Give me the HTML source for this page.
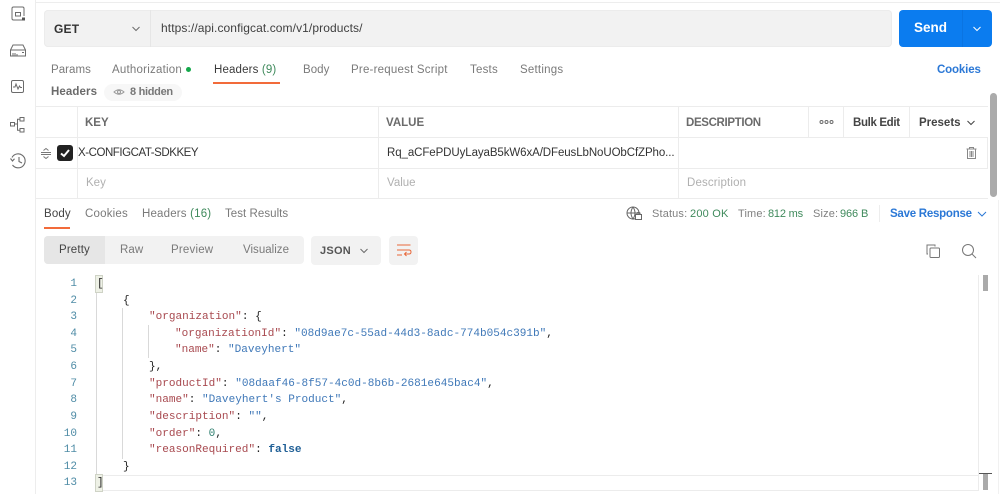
<!DOCTYPE html>
<html><head><meta charset="utf-8"><style>
html,body{margin:0;padding:0;background:#fff}
body{width:1000px;height:494px;overflow:hidden;position:relative;font-family:"Liberation Sans",sans-serif;font-size:11.5px;color:#6b6b6b}
#p{position:absolute;left:0;top:0;width:1000px;height:494px;filter:blur(.35px)}
.t{position:absolute;white-space:nowrap;line-height:16px;height:16px}
.b{position:absolute}
.c{position:absolute;white-space:pre;font-family:"Liberation Mono",monospace;font-size:11.05px;line-height:16px;height:16px;color:#212121}
.n{position:absolute;width:46px;left:31px;text-align:right;font-family:"Liberation Mono",monospace;font-size:11.05px;line-height:16px;color:#4f8ca6}
.k{color:#a8494f}.s{color:#3f78b8}.g{color:#3f8a5c}.d{color:#2f7f6f}
svg{position:absolute;fill:none;stroke:#6b6b6b;stroke-width:1}
</style></head><body><div id="p">
<div class="b" style="left:35px;top:0;width:1px;height:494px;background:#ededed"></div>
<div class="b" style="left:36px;top:2px;width:964px;height:1px;background:#ededed"></div>

<svg style="left:10px;top:5px" width="18" height="18" viewBox="0 0 18 18"><path d="M13 15H3.500Q2 15 2 13.500V3.500Q2 2 3.500 2H12.500Q14 2 14 3.500V11"/><path d="M5.500 7.500H10.500V11H5.500Z"/><rect x="12" y="12.500" width="3" height="3" fill="#555" stroke="none"/></svg>
<svg style="left:9px;top:42px" width="18" height="16" viewBox="0 0 18 16"><path d="M1.500 8L4 3H14L16.500 8V14H1.500Z"/><path d="M1.500 8H16.500M4 11V14M6 11V14M8 12V14M13 10.500H15"/></svg>
<svg style="left:10px;top:79px" width="16" height="16" viewBox="0 0 16 16"><rect x="1.500" y="1.500" width="12" height="12" rx="1.500"/><path d="M3 8H5L6 5L8 10L9.500 7L10.500 8.500H12"/></svg>
<svg style="left:9px;top:116px" width="18" height="18" viewBox="0 0 18 18"><rect x="1.500" y="6.500" width="4" height="3.500"/><rect x="11" y="1.500" width="4" height="3.500"/><rect x="11" y="12.500" width="4" height="3.500"/><path d="M5.500 8H8.500M11 3.300H8.500V14.300H11"/></svg>
<svg style="left:9px;top:152px" width="18" height="18" viewBox="0 0 18 18"><path d="M3 5.500A7 7 0 1 1 3.500 13M1.500 6.500L3.500 9L5.500 6.800M10 5V9.500L13 11" stroke-width="1.100"/></svg>

<div class="b" style="left:44px;top:10px;width:848px;height:37px;background:#f2f2f2;border-radius:4px;box-shadow:inset 0 0 0 1px #ececec"></div>
<div class="b" style="left:150px;top:10px;width:1px;height:37px;background:#e6e6e6"></div>
<div class="t" style="left:54px;top:21px;font-size:12px;font-weight:bold;color:#333;letter-spacing:.2px">GET</div>
<svg style="left:130px;top:24px" width="12" height="10" viewBox="0 0 12 10"><path d="M2.500 3L6 6.500L9.500 3"/></svg>
<div class="t" style="left:161px;top:20px;font-size:12px;color:#3f3f3f;letter-spacing:.09px">https://api.configcat.com/v1/products/</div>

<div class="b" style="left:899px;top:10px;width:93px;height:37px;background:#0b7cef;border-radius:4px"></div>
<div class="b" style="left:962px;top:10px;width:1px;height:37px;background:#0a74e2"></div>
<div class="t" style="left:914px;top:20px;font-size:13.5px;font-weight:bold;color:#fff">Send</div>
<svg style="left:971px;top:24px;stroke:#fff" width="12" height="10" viewBox="0 0 12 10"><path d="M2.500 3L6 6.500L9.500 3"/></svg>

<div class="t" style="left:51px;top:62px;letter-spacing:.05px;color:#7a7a7a">Params</div>
<div class="t" style="left:112px;top:62px;letter-spacing:.22px;color:#7a7a7a">Authorization</div>
<div class="b" style="left:186px;top:67px;width:5px;height:5px;border-radius:50%;background:#14a84b"></div>
<div class="t" style="left:214px;top:62px;letter-spacing:.15px;color:#3a3a3a">Headers <span class="g">(9)</span></div>
<div class="b" style="left:213px;top:82px;width:67px;height:2px;background:#f26b3a"></div>
<div class="t" style="left:303px;top:62px;letter-spacing:.05px;color:#7a7a7a">Body</div>
<div class="t" style="left:351px;top:62px;letter-spacing:.22px;color:#7a7a7a">Pre-request Script</div>
<div class="t" style="left:470px;top:62px;letter-spacing:.22px;color:#7a7a7a">Tests</div>
<div class="t" style="left:520px;top:62px;letter-spacing:.22px;color:#7a7a7a">Settings</div>
<div class="t" style="left:937px;top:62px;font-weight:bold;letter-spacing:-.15px;color:#2b78d6">Cookies</div>

<div class="t" style="left:51px;top:84px;font-weight:bold;letter-spacing:.1px;color:#6b6b6b">Headers</div>
<div class="b" style="left:104px;top:84px;width:78px;height:17px;background:#f7f7f7;border-radius:9px"></div>
<svg style="left:113px;top:87px" width="12" height="10" viewBox="0 0 12 10"><path d="M1 5Q6 .5 11 5Q6 9.500 1 5Z" stroke="#999"/><circle cx="6" cy="5" r="1.500" stroke="#999"/></svg>
<div class="t" style="left:130px;top:84px;font-size:11px;font-weight:bold;letter-spacing:-.3px;color:#777">8 hidden</div>

<div class="b" style="left:36px;top:106px;width:952px;height:1px;background:#ececec"></div>
<div class="b" style="left:36px;top:137px;width:952px;height:1px;background:#ececec"></div>
<div class="b" style="left:36px;top:168px;width:952px;height:1px;background:#ececec"></div>
<div class="b" style="left:36px;top:198px;width:952px;height:1px;background:#ececec"></div>
<div class="b" style="left:77px;top:106px;width:1px;height:92px;background:#ececec"></div>
<div class="b" style="left:378px;top:106px;width:1px;height:92px;background:#ececec"></div>
<div class="b" style="left:678px;top:106px;width:1px;height:92px;background:#ececec"></div>
<div class="b" style="left:808px;top:106px;width:1px;height:31px;background:#ececec"></div>
<div class="b" style="left:843px;top:106px;width:1px;height:31px;background:#ececec"></div>
<div class="b" style="left:909px;top:106px;width:1px;height:31px;background:#ececec"></div>
<div class="b" style="left:987px;top:137px;width:1px;height:31px;background:#ececec"></div>

<div class="t" style="left:85px;top:115px;font-weight:bold;font-size:11.500px;color:#6b6b6b">KEY</div>
<div class="t" style="left:386px;top:115px;font-weight:bold;color:#6b6b6b">VALUE</div>
<div class="t" style="left:686px;top:115px;font-weight:bold;letter-spacing:-.35px;color:#6b6b6b">DESCRIPTION</div>
<svg style="left:819px;top:119px" width="15" height="6" viewBox="0 0 15 6"><circle cx="2.500" cy="3" r="1.500"/><circle cx="7.500" cy="3" r="1.500"/><circle cx="12.500" cy="3" r="1.500"/></svg>
<div class="t" style="left:853px;top:115px;font-weight:bold;letter-spacing:-.35px;color:#444">Bulk Edit</div>
<div class="t" style="left:919px;top:115px;font-weight:bold;letter-spacing:0;color:#444">Presets</div>
<svg style="left:965px;top:118px;stroke:#444" width="12" height="10" viewBox="0 0 12 10"><path d="M2.500 3L6 6.500L9.500 3"/></svg>

<svg style="left:40px;top:147px;stroke:#777" width="12" height="13" viewBox="0 0 12 13"><path d="M1 5.500H11M1 7.500H11M3.500 3.500L6 1.500L8.500 3.500M3.500 9.500L6 11.500L8.500 9.500"/></svg>
<div class="b" style="left:57px;top:145px;width:16px;height:16px;border-radius:3px;background:#222"></div>
<svg style="left:59px;top:147px;stroke:#fff;stroke-width:2" width="12" height="12" viewBox="0 0 12 12"><path d="M2 6.500L5 9L10 3"/></svg>
<div class="t" style="left:78px;top:145px;font-size:11.500px;color:#333;letter-spacing:-.45px">X-CONFIGCAT-SDKKEY</div>
<div class="t" style="left:387px;top:145px;font-size:11.500px;color:#333;letter-spacing:-.09px">Rq_aCFePDUyLayaB5kW6xA/DFeusLbNoUObCfZPho...</div>
<svg style="left:965px;top:146px;stroke:#888" width="13" height="14" viewBox="0 0 13 14"><path d="M1.500 3H11.500M4.500 3V1.500H8.500V3M2.500 3V12.500H10.500V3M5 5V11M6.500 5V11M8 5V11"/></svg>

<div class="t" style="left:86px;top:175px;color:#b0b0b0">Key</div>
<div class="t" style="left:387px;top:175px;color:#b0b0b0">Value</div>
<div class="t" style="left:687px;top:175px;color:#b0b0b0;letter-spacing:.15px">Description</div>

<div class="b" style="left:990px;top:93px;width:7px;height:104px;background:#ababab;border-radius:4px"></div>

<div class="t" style="left:44px;top:206px;letter-spacing:.15px;color:#444">Body</div>
<div class="b" style="left:44px;top:227px;width:26px;height:2px;background:#f26b3a"></div>
<div class="t" style="left:85px;top:206px;letter-spacing:.2px;color:#7a7a7a">Cookies</div>
<div class="t" style="left:142px;top:206px;letter-spacing:.18px;color:#7a7a7a">Headers <span class="g">(16)</span></div>
<div class="t" style="left:225px;top:206px;letter-spacing:.05px;color:#7a7a7a">Test Results</div>

<svg style="left:626px;top:206px;stroke:#666" width="17" height="15" viewBox="0 0 17 15"><circle cx="7" cy="7" r="6"/><path d="M1 7H13M7 1Q3 7 7 13Q11 7 7 1"/><rect x="9.500" y="8.500" width="6" height="5" fill="#fff"/><path d="M11 8.500V7Q12.500 5.500 14 7V8.500"/></svg>
<div class="t" style="left:652px;top:206px;font-size:11px;letter-spacing:.15px;color:#808080">Status:</div>
<div class="t" style="left:690px;top:206px;font-size:11px;letter-spacing:.2px;color:#3f8a5c">200 OK</div>
<div class="t" style="left:738px;top:206px;font-size:11px;letter-spacing:.15px;color:#808080">Time:</div>
<div class="t" style="left:768px;top:206px;font-size:11px;letter-spacing:-.2px;color:#3f8a5c">812 ms</div>
<div class="t" style="left:813px;top:206px;font-size:11px;letter-spacing:.15px;color:#808080">Size:</div>
<div class="t" style="left:840px;top:206px;font-size:11px;letter-spacing:-.1px;color:#3f8a5c">966 B</div>
<div class="b" style="left:879px;top:205px;width:1px;height:17px;background:#ededed"></div>
<div class="t" style="left:890px;top:206px;font-weight:bold;letter-spacing:-.25px;color:#2b78d6">Save Response</div>
<svg style="left:976px;top:209px;stroke:#2b78d6" width="12" height="10" viewBox="0 0 12 10"><path d="M2 3L6 7L10 3"/></svg>

<div class="b" style="left:44px;top:236px;width:260px;height:28px;background:#f2f2f2;border-radius:4px"></div>
<div class="b" style="left:44px;top:236px;width:61px;height:28px;background:#e6e6e6;border-radius:4px 0 0 4px"></div>
<div class="t" style="left:59px;top:242px;letter-spacing:.15px;color:#444">Pretty</div>
<div class="t" style="left:120px;top:242px;letter-spacing:.1px;color:#7a7a7a">Raw</div>
<div class="t" style="left:171px;top:242px;letter-spacing:.2px;color:#7a7a7a">Preview</div>
<div class="t" style="left:243px;top:242px;letter-spacing:.02px;color:#7a7a7a">Visualize</div>
<div class="b" style="left:311px;top:236px;width:70px;height:29px;background:#f2f2f2;border-radius:4px"></div>
<div class="t" style="left:320px;top:243px;font-size:11px;font-weight:bold;letter-spacing:.25px;color:#555">JSON</div>
<svg style="left:358px;top:246px" width="12" height="10" viewBox="0 0 12 10"><path d="M2.500 3L6 6.500L9.500 3"/></svg>
<div class="b" style="left:389px;top:236px;width:29px;height:29px;background:#f2f2f2;border-radius:4px"></div>
<svg style="left:396px;top:243px;stroke:#e8683a" width="16" height="15" viewBox="0 0 16 15"><path d="M1 2H14.500M1 7H13Q15 7 15 9Q15 11 13 11H8.500M10.500 9L8.500 11L10.500 13M1 12H6"/></svg>
<svg style="left:925px;top:243px;stroke:#777" width="16" height="16" viewBox="0 0 16 16"><path d="M3 11H2V2H10V3.500"/><rect x="5" y="5" width="9.500" height="9.500" rx="1"/></svg>
<svg style="left:961px;top:243px;stroke:#777" width="16" height="16" viewBox="0 0 16 16"><circle cx="7" cy="7" r="5.500"/><path d="M11 11L15 15"/></svg>

<div class="b" style="left:96px;top:276px;width:1px;height:205px;background:#d9d9d9"></div>
<div class="b" style="left:122px;top:308px;width:1px;height:151px;background:#d9d9d9"></div>
<div class="b" style="left:148px;top:325px;width:1px;height:33px;background:#d9d9d9"></div>
<div class="b" style="left:96px;top:276px;width:6px;height:16px;background:#eef1e6;box-shadow:0 0 0 1px #cfd3c6"></div>
<div class="b" style="left:96px;top:475px;width:882px;height:1px;background:#ececec"></div>
<div class="b" style="left:96px;top:490px;width:882px;height:1px;background:#ececec"></div>
<div class="b" style="left:96px;top:475px;width:6px;height:16px;background:#eef1e6;box-shadow:0 0 0 1px #cfd3c6"></div>

<div class="n" style="top:276px">1</div><div class="c" style="left:97px;top:276px">[</div>
<div class="n" style="top:293px">2</div><div class="c" style="left:123px;top:293px">{</div>
<div class="n" style="top:309px">3</div><div class="c" style="left:149px;top:309px"><span class="k">"organization"</span>: {</div>
<div class="n" style="top:326px">4</div><div class="c" style="left:175px;top:326px"><span class="k">"organizationId"</span>: <span class="s">"08d9ae7c-55ad-44d3-8adc-774b054c391b"</span>,</div>
<div class="n" style="top:342px">5</div><div class="c" style="left:175px;top:342px"><span class="k">"name"</span>: <span class="s">"Daveyhert"</span></div>
<div class="n" style="top:359px">6</div><div class="c" style="left:149px;top:359px">},</div>
<div class="n" style="top:376px">7</div><div class="c" style="left:149px;top:376px"><span class="k">"productId"</span>: <span class="s">"08daaf46-8f57-4c0d-8b6b-2681e645bac4"</span>,</div>
<div class="n" style="top:392px">8</div><div class="c" style="left:149px;top:392px"><span class="k">"name"</span>: <span class="s">"Daveyhert's Product"</span>,</div>
<div class="n" style="top:409px">9</div><div class="c" style="left:149px;top:409px"><span class="k">"description"</span>: <span class="s">""</span>,</div>
<div class="n" style="top:426px">10</div><div class="c" style="left:149px;top:426px"><span class="k">"order"</span>: <span class="d">0</span>,</div>
<div class="n" style="top:442px">11</div><div class="c" style="left:149px;top:442px"><span class="k">"reasonRequired"</span>: <b style="color:#1f5f96">false</b></div>
<div class="n" style="top:459px">12</div><div class="c" style="left:123px;top:459px">}</div>
<div class="n" style="top:475px">13</div><div class="c" style="left:97px;top:475px">]</div>

<div class="b" style="left:978px;top:275px;width:1px;height:216px;background:#ececec"></div>
<div class="b" style="left:998px;top:200px;width:1px;height:294px;background:#f1f1f1"></div>
<div class="b" style="left:983px;top:275px;width:5px;height:16px;background:#aaa"></div>
<div class="b" style="left:979px;top:473px;width:13px;height:1px;background:#555"></div>
<div class="b" style="left:983px;top:474px;width:5px;height:16px;background:#aaa"></div>
</div></body></html>
